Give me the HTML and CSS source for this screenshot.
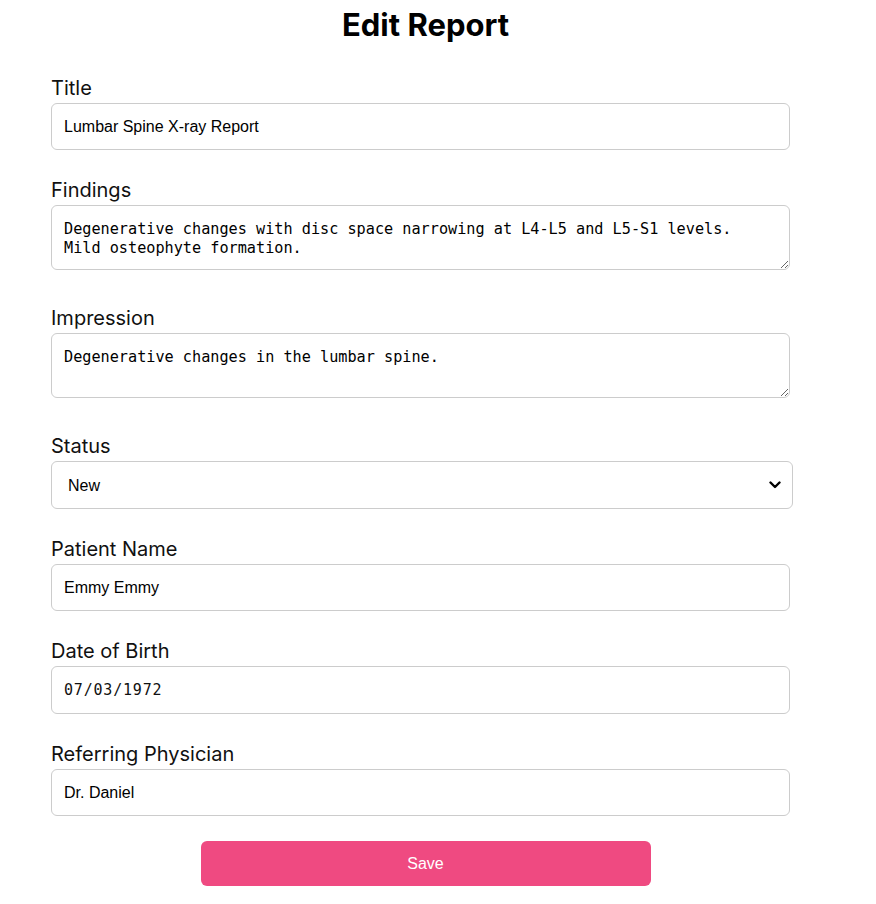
FILE: index.html
```html
<!DOCTYPE html>
<html lang="en">
<head>
<meta charset="utf-8">
<title>Edit Report</title>
<link rel="stylesheet" href="styles.css">
</head>
<body>
<div class="container">
  <h1 class="page-title">Edit Report</h1>
  <form class="report-form">
    <div class="field">
      <label class="field-label" for="title">Title</label>
      <input class="text-input" id="title" type="text" value="Lumbar Spine X-ray Report">
    </div>
    <div class="field field-area">
      <label class="field-label" for="findings">Findings</label>
      <textarea class="text-area" id="findings">Degenerative changes with disc space narrowing at L4-L5 and L5-S1 levels. Mild osteophyte formation.</textarea>
    </div>
    <div class="field field-area">
      <label class="field-label" for="impression">Impression</label>
      <textarea class="text-area" id="impression">Degenerative changes in the lumbar spine.</textarea>
    </div>
    <div class="field">
      <label class="field-label" for="status">Status</label>
      <div class="select-wrap">
        <select class="select-input" id="status">
          <option>New</option>
          <option>In Progress</option>
          <option>Final</option>
        </select>
        <svg class="select-arrow" width="12" height="8" viewBox="0 0 12 8"><path d="M1.5 1.5 L6 6 L10.5 1.5" fill="none" stroke="#000" stroke-width="2.4" stroke-linecap="round" stroke-linejoin="round"/></svg>
      </div>
    </div>
    <div class="field">
      <label class="field-label" for="patient">Patient Name</label>
      <input class="text-input" id="patient" type="text" value="Emmy Emmy">
    </div>
    <div class="field">
      <label class="field-label" for="dob">Date of Birth</label>
      <input class="text-input mono tall" id="dob" type="text" value="07/03/1972">
    </div>
    <div class="field field-last">
      <label class="field-label" for="physician">Referring Physician</label>
      <input class="text-input" id="physician" type="text" value="Dr. Daniel">
    </div>
    <button class="save-btn" type="button">Save</button>
  </form>
</div>
</body>
</html>
```

FILE: styles.css
```css
html, body {
  margin: 0;
  padding: 0;
  background: #ffffff;
}

body {
  font-family: Inter, "Noto Sans", sans-serif;
  color: #111111;
}

.container {
  width: 749px;
  margin-left: 51px;
}

.page-title {
  margin: 6px 0 33px;
  font-size: 31px;
  font-weight: 700;
  line-height: 38px;
  text-align: center;
  color: #000000;
}

.report-form {
  display: flex;
  flex-direction: column;
}

.field {
  display: flex;
  flex-direction: column;
  margin-bottom: 29px;
}

.field-area {
  margin-bottom: 37px;
}

.field-last {
  margin-bottom: 25px;
}

.field-label {
  font-size: 20px;
  line-height: 22px;
  margin-bottom: 4px;
  color: #111111;
}

.text-input,
.text-area,
.select-input {
  box-sizing: border-box;
  width: 739px;
  border: 1px solid #cccccc;
  border-radius: 6px;
  background: #ffffff;
  color: #000000;
  outline: none;
  margin: 0;
}

.text-input {
  height: 47px;
  padding: 0 12px;
  font-family: "Liberation Sans", Arial, sans-serif;
  font-size: 16px;
}

.text-input.tall {
  height: 48px;
}

.text-input.mono {
  font-family: "DejaVu Sans Mono", monospace;
  font-size: 15px;
  letter-spacing: 0.8px;
  color: #111111;
}

.text-area {
  display: block;
  height: 65px;
  padding: 14px 12px 10px;
  font-family: "DejaVu Sans Mono", monospace;
  font-size: 15.2px;
  line-height: 19px;
  resize: vertical;
}

.select-wrap {
  position: relative;
  width: 742px;
}

.select-input {
  width: 742px;
  height: 48px;
  padding: 0 16px;
  font-family: "Liberation Sans", Arial, sans-serif;
  font-size: 16px;
  -webkit-appearance: none;
  appearance: none;
}

.select-arrow {
  position: absolute;
  right: 12px;
  top: 20px;
  pointer-events: none;
}

.save-btn {
  align-self: center;
  width: 450px;
  height: 45px;
  border: none;
  border-radius: 6px;
  background: #ef4a81;
  color: #ffffff;
  font-family: "Liberation Sans", Arial, sans-serif;
  font-size: 16px;
  cursor: pointer;
}
```
